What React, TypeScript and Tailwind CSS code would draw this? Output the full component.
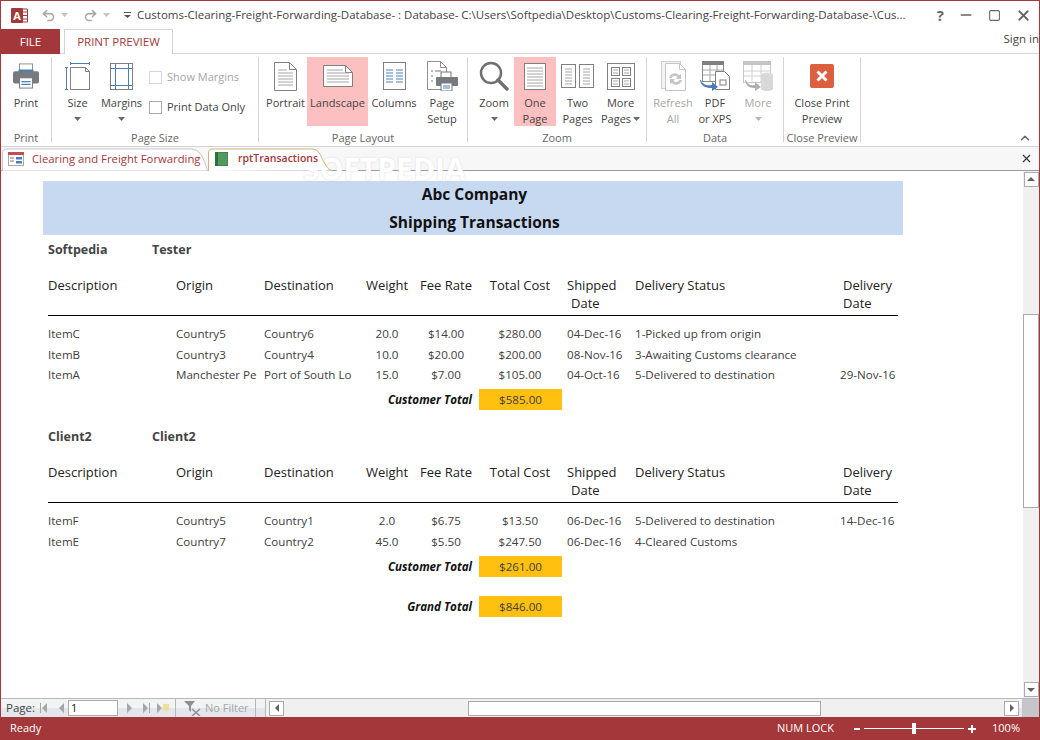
import React from 'react';
import { Undo2, Redo2, Minus, Square, X, ChevronUp } from 'lucide-react';

const BLUE = '#4a7ebb';

function Caret({ c = '#6a6a6a' }: { c?: string }) {
  return (
    <svg width="7" height="4" viewBox="0 0 7 4" className="shrink-0">
      <path d="M0 0h7L3.5 4z" fill={c} />
    </svg>
  );
}

const PrintIcon = () => (
  <svg width="28" height="26" viewBox="0 0 30 28">
    <rect x="8" y="1" width="14" height="9" fill="#fff" stroke="#8a8a8a" />
    <rect x="7" y="7" width="16" height="4" fill={BLUE} />
    <path d="M3 9h24a2 2 0 0 1 2 2v9a2 2 0 0 1-2 2H3a2 2 0 0 1-2-2v-9a2 2 0 0 1 2-2z" fill="#777b80" />
    <rect x="8" y="16" width="14" height="11" fill="#fff" stroke="#777" />
    <path d="M10 20h10M10 23h10" stroke={BLUE} strokeWidth="1.5" />
  </svg>
);
const SizeIcon = () => (
  <svg width="26" height="29" viewBox="0 0 26 29">
    <path d="M5.5 5.5h15l4 4v18h-19z" fill="#fff" stroke="#808080" />
    <path d="M20.5 5.5v4h4" fill="none" stroke="#808080" />
    <path d="M5.5 1.5h19M5.500 0v3M24.500 0v3M1.500 5.500v22M0 5.500h3M0 27.500h3" stroke={BLUE} />
  </svg>
);
const MarginsIcon = () => (
  <svg width="24" height="29" viewBox="0 0 24 29">
    <rect x="0.5" y="1.5" width="22" height="26" fill="#fff" stroke="#7f7f7f" />
    <path d="M5.500 2v25M18.500 2v25M1 6.500h21M1 23.500h21" stroke={BLUE} />
  </svg>
);
const PortraitIcon = () => (
  <svg width="23" height="29" viewBox="0 0 23 29">
    <path d="M.5.5h15l7 7v21H.5z" fill="#fff" stroke="#808080" />
    <path d="M15.500.5v7h7" fill="none" stroke="#808080" />
    <path d="M4 8h9M4 11h15M4 14h15M4 17h15M4 20h15M4 23h15" stroke="#a6a6a6" />
  </svg>
);
const LandscapeIcon = () => (
  <svg width="30" height="22" viewBox="0 0 30 22">
    <path d="M.5.5h22l7 7v14H.5z" fill="#fff" stroke="#808080" />
    <path d="M22.500.5v7h7" fill="none" stroke="#808080" />
    <path d="M4 5h16M4 8h22M4 11h22M4 14h22M4 17h22" stroke="#a6a6a6" />
  </svg>
);
const ColumnsIcon = () => (
  <svg width="23" height="28" viewBox="0 0 23 28">
    <rect x=".5" y=".5" width="22" height="27" fill="#fff" stroke="#808080" />
    <path d="M3 8h7M13 8h7M3 11h7M13 11h7M3 14h7M13 14h7M3 17h7M13 17h7M3 20h7M13 20h7" stroke={BLUE} />
  </svg>
);
const SetupIcon = () => (
  <svg width="31" height="30" viewBox="0 0 31 30">
    <path d="M.5.5h13l6 6v22H.5z" fill="#fff" stroke="#909090" />
    <path d="M13.500.5v6h6" fill="none" stroke="#909090" />
    <path d="M4 10h2M8 10h6M4 15h2M4 20h2" stroke="#777" />
    <rect x="14" y="11" width="10" height="7" fill="#fff" stroke="#777" />
    <path d="M10 16h20a1 1 0 0 1 1 1v7a1 1 0 0 1-1 1H10a1 1 0 0 1-1-1v-7a1 1 0 0 1 1-1z" fill="#777b80" />
    <rect x="14" y="22" width="11" height="8" fill="#fff" stroke="#777" />
    <path d="M16 25h7M16 27h7" stroke={BLUE} />
  </svg>
);
const ZoomIcon = () => (
  <svg width="30" height="30" viewBox="0 0 30 30">
    <circle cx="12" cy="12" r="10" fill="none" stroke="#707070" strokeWidth="2.500" />
    <path d="M19 19l9 9" stroke="#707070" strokeWidth="3.500" strokeLinecap="round" />
  </svg>
);
const OnePageIcon = () => (
  <svg width="22" height="27" viewBox="0 0 22 27">
    <rect x=".5" y=".5" width="21" height="26" fill="#fff" stroke="#808080" />
    <path d="M3 5h16M3 8h16M3 11h16M3 14h16M3 17h16M3 20h16M3 23h16" stroke="#a6a6a6" />
  </svg>
);
const TwoPagesIcon = () => (
  <svg width="33" height="24" viewBox="0 0 33 24">
    <rect x=".5" y=".5" width="14" height="23" fill="#fff" stroke="#808080" />
    <rect x="18.500" y=".5" width="14" height="23" fill="#fff" stroke="#808080" />
    <path d="M4 5h7M4 8h7M4 11h7M4 14h7M4 17h7M4 20h7M22 5h7M22 8h7M22 11h7M22 14h7M22 17h7M22 20h7" stroke="#a6a6a6" />
  </svg>
);
const MorePagesIcon = () => (
  <svg width="28" height="27" viewBox="0 0 28 27">
    <rect x=".5" y=".5" width="27" height="26" fill="#fff" stroke="#808080" />
    <rect x="4.500" y="4.500" width="8" height="8" fill="#fff" stroke="#808080" />
    <rect x="15.500" y="4.500" width="8" height="8" fill="#fff" stroke="#808080" />
    <rect x="4.500" y="15.500" width="8" height="8" fill="#fff" stroke="#808080" />
    <rect x="15.500" y="15.500" width="8" height="8" fill="#fff" stroke="#808080" />
    <path d="M6 7h5M6 10h5M17 7h5M17 10h5M6 18h5M6 21h5M17 18h5M17 21h5" stroke="#a6a6a6" />
  </svg>
);
const RefreshIcon = () => (
  <svg width="25" height="30" viewBox="0 0 25 30">
    <rect x=".5" y=".5" width="19" height="27" fill="#f4f4f4" stroke="#cfcfcf" />
    <path d="M4.500 2.500h14l6 6v21h-20z" fill="#fff" stroke="#c4c4c4" />
    <path d="M18.500 2.500v6h6" fill="none" stroke="#c4c4c4" />
    <path d="M8 17a6 6 0 0 1 10-3l2-1v5h-5l1.500-2a4 4 0 0 0-6 1zM21 19a6 6 0 0 1-10 3l-2 1v-5h5l-1.500 2a4 4 0 0 0 6-1z" fill="#c6c6c6" />
  </svg>
);
const PdfIcon = () => (
  <svg width="31" height="30" viewBox="0 0 31 30">
    <rect x="2.500" y=".5" width="21" height="20" fill="#fff" stroke="#8a8a8a" />
    <rect x="2" y="0" width="22" height="4" fill="#808080" />
    <path d="M3 9h20M3 14h20M10 4v16M17 4v16" stroke="#a8a8a8" />
    <path d="M15.500 10.500h9l5 5v13h-14z" fill="#fff" stroke="#7f7f7f" />
    <rect x="20" y="19" width="6" height="5" fill="#fff" stroke="#7f7f7f" />
    <path d="M1 19c1 4 5 6 11 5v-3l6 5-6 4v-3C7 27 1 26 0 19z" fill={BLUE} />
  </svg>
);
const MoreDataIcon = () => (
  <svg width="30" height="30" viewBox="0 0 30 30">
    <rect x=".5" y=".5" width="27" height="21" fill="#fff" stroke="#c8c8c8" />
    <rect x="0" y="0" width="28" height="4" fill="#c4c4c4" />
    <path d="M1 10h26M1 15h26M9 4v17M18 4v17" stroke="#d0d0d0" />
    <path d="M3 19c1 4 4 6 9 5v-3l6 5-6 4v-3C7 27 3 26 2 19z" fill="#b0b0b0" />
    <ellipse cx="24" cy="14" rx="6" ry="2.500" fill="#dcdcdc" />
    <path d="M18 14h12v14c0 1-3 2-6 2s-6-1-6-2z" fill="#d8d8d8" />
  </svg>
);
const CloseIcon = () => (
  <svg width="24" height="24" viewBox="0 0 24 24">
    <rect width="24" height="24" rx="2" fill="#dc5f3f" />
    <path d="M7.500 7.500l9 9M16.500 7.500l-9 9" stroke="#fff" strokeWidth="3" />
  </svg>
);

type BtnProps = {
  w: string;
  icon: React.ReactNode;
  lines: string[];
  caret?: boolean;
  dim?: boolean;
  on?: boolean;
};

function RibbonBtn({ w, icon, lines, caret, dim, on }: BtnProps) {
  return (
    <div className={`${w} h-[69px] flex flex-col items-center shrink-0 ${on ? 'bg-[#fcc0c0]' : ''} ${dim ? 'text-[#a6a6a6]' : 'text-[#444]'}`}>
      <div className="h-[38px] w-full flex items-center justify-center shrink-0">{icon}</div>
      {lines.map(l => (
        <div key={l} className="leading-[16px] whitespace-nowrap">{l}</div>
      ))}
      {caret && (
        <div className="h-[16px] flex items-center justify-center">
          <Caret c={dim ? '#b5b5b5' : '#6a6a6a'} />
        </div>
      )}
    </div>
  );
}

function Group({ w, label, children }: { w: string; label: string; children: React.ReactNode }) {
  return (
    <div className={`${w} h-[85px] flex flex-col border-r border-[#d4d4d4] shrink-0`}>
      <div className="h-[71px] flex shrink-0">{children}</div>
      <div className="flex-1 flex items-start justify-center pt-[3px] leading-[14px] text-[#666] text-[11px] whitespace-nowrap">{label}</div>
    </div>
  );
}

type Row = { d: string; o: string; t: string; w: string; f: string; c: string; s: string; st: string; del?: string };

const GRID = 'grid grid-cols-[128px_88px_101px_49px_62px_88px_68px_211px_55px]';

function Header() {
  return (
    <div className="border-b border-black h-[41px] pt-[1px] mr-[5px]">
      <div className={`${GRID} text-[#222] text-[13px] leading-[18px]`}>
        <div>Description</div>
        <div>Origin</div>
        <div>Destination</div>
        <div className="text-center -ml-[5px] whitespace-nowrap">Weight</div>
        <div className="text-center -mr-[2px]">Fee Rate</div>
        <div className="text-center">Total Cost</div>
        <div className="pl-[3px]">Shipped<div className="pl-[4px]">Date</div></div>
        <div className="pl-[3px]">Delivery Status</div>
        <div>Delivery<div>Date</div></div>
      </div>
    </div>
  );
}

function DataRow({ r }: { r: Row }) {
  return (
    <div className={`${GRID} text-[#404040] text-[11.6px] leading-[17px] h-[20px] first:h-[21px] pt-[2px] whitespace-nowrap`}>
      <div>{r.d}</div>
      <div>{r.o}</div>
      <div>{r.t}</div>
      <div className="text-center -ml-[5px]">{r.w}</div>
      <div className="text-center -mr-[2px]">{r.f}</div>
      <div className="text-center">{r.c}</div>
      <div className="pl-[3px]">{r.s}</div>
      <div className="pl-[3px]">{r.st}</div>
      <div className="-ml-[3px]">{r.del}</div>
    </div>
  );
}

function Total({ label, value }: { label: string; value: string }) {
  return (
    <div className="flex items-center h-[21px]">
      <div className="w-[431px] text-right pr-[7px] font-bold italic text-[11.6px] text-[#111]">{label}</div>
      <div className="w-[83px] h-[21px] bg-[#ffc010] flex items-center justify-center text-[11.6px] text-[#404040]">{value}</div>
    </div>
  );
}

function Customer({ a, b, rows, total, mt, gap }: { a: string; b: string; rows: Row[]; total: string; mt: string; gap: string }) {
  return (
    <div className={mt}>
      <div className="flex font-bold text-[#444] text-[12.500px] h-[18px] items-center">
        <div className="w-[104px]">{a}</div>
        <div>{b}</div>
      </div>
      <div className="mt-[16px]"><Header /></div>
      <div className="mt-[7px]">
        {rows.map(r => <DataRow key={r.d} r={r} />)}
      </div>
      <div className={gap}><Total label="Customer Total" value={total} /></div>
    </div>
  );
}

const SOFT: Row[] = [
  { d: 'ItemC', o: 'Country5', t: 'Country6', w: '20.0', f: '$14.00', c: '$280.00', s: '04-Dec-16', st: '1-Picked up from origin' },
  { d: 'ItemB', o: 'Country3', t: 'Country4', w: '10.0', f: '$20.00', c: '$200.00', s: '08-Nov-16', st: '3-Awaiting Customs clearance' },
  { d: 'ItemA', o: 'Manchester Pe', t: 'Port of South Lo', w: '15.0', f: '$7.00', c: '$105.00', s: '04-Oct-16', st: '5-Delivered to destination', del: '29-Nov-16' },
];
const CLIENT: Row[] = [
  { d: 'ItemF', o: 'Country5', t: 'Country1', w: '2.0', f: '$6.75', c: '$13.50', s: '06-Dec-16', st: '5-Delivered to destination', del: '14-Dec-16' },
  { d: 'ItemE', o: 'Country7', t: 'Country2', w: '45.0', f: '$5.50', c: '$247.50', s: '06-Dec-16', st: '4-Cleared Customs' },
];

function ScrollBtn({ dir, cls }: { dir: 'u' | 'd' | 'l' | 'r'; cls?: string }) {
  const d = { u: 'M1 6h8L5 2z', d: 'M1 3h8L5 7z', l: 'M7 1v8L3 5z', r: 'M3 1v8L7 5z' }[dir];
  return (
    <div className={`w-[15px] h-[15px] bg-white border border-[#ababab] flex items-center justify-center shrink-0 ${cls ?? ''}`}>
      <svg width="10" height="10" viewBox="0 0 10 10"><path d={d} fill="#606060" /></svg>
    </div>
  );
}

export default function App() {
  return (
    <div className="w-[1040px] h-[740px] flex flex-col bg-white border-x border-t border-[#a4373a] overflow-hidden text-[11px] text-[#444] font-['Open_Sans',sans-serif]">
      {/* title bar */}
      <div className="h-[28px] flex items-center shrink-0">
        <div className="w-[136px] flex items-center pl-[10px] shrink-0">
          <svg width="17" height="17" viewBox="0 0 17 17">
            <path d="M8 2h8.500v13H8z" fill="#fff" stroke="#a4373a" />
            <path d="M10 5h6M10 8.500h6M10 12h6" stroke="#a4373a" />
            <rect x="0" y="1" width="12" height="15" rx="1" fill="#a4373a" />
            <text x="6" y="13" textAnchor="middle" fontSize="11" fontWeight="700" fill="#fff">A</text>
          </svg>
          <Undo2 size={15} className="ml-[13px] text-[#a8a8a8]" strokeWidth={2.500} />
          <div className="ml-[5px]"><Caret c="#c4c4c4" /></div>
          <Redo2 size={15} className="ml-[15px] text-[#a8a8a8]" strokeWidth={2.500} />
          <div className="ml-[5px]"><Caret c="#c4c4c4" /></div>
          <svg width="7" height="6" viewBox="0 0 7 6" className="ml-[14px]">
            <path d="M0 0h7v1H0zM0 3h7L3.500 6z" fill="#555" />
          </svg>
        </div>
        <div className="w-[780px] text-[11.500px] text-[#444] whitespace-nowrap overflow-hidden shrink-0">
          {'Customs-Clearing-Freight-Forwarding-Database- : Database- C:\\Users\\Softpedia\\Desktop\\Customs-Clearing-Freight-Forwarding-Database-\\Cus...'}
        </div>
        <div className="flex-1 flex items-center justify-end pr-[7px] gap-[12px] text-[#666]">
          <span className="font-bold text-[15px] leading-none mr-[2px]">?</span>
          <Minus size={16} strokeWidth={2.500} />
          <Square size={13} strokeWidth={2} className="mx-[2px]" />
          <X size={17} strokeWidth={2.500} />
        </div>
      </div>

      {/* ribbon tabs */}
      <div className="h-[25px] flex items-end border-b border-[#d4d4d4] shrink-0">
        <div className="w-[59px] h-[25px] mb-[-1px] bg-[#a4373a] text-white flex items-center justify-center text-[11.500px]">FILE</div>
        <div className="w-[109px] h-[25px] mb-[-1px] ml-[4px] bg-white border border-b-0 border-[#d4d4d4] text-[#a4373a] flex items-center justify-center text-[11.500px]">PRINT PREVIEW</div>
        <div className="flex-1 self-start text-right text-[11.500px] leading-[20px] whitespace-nowrap overflow-hidden">Sign in</div>
      </div>

      {/* ribbon */}
      <div className="h-[93px] flex pt-[3px] border-b border-[#d4d4d4] relative shrink-0">
        <Group w="w-[51px]" label="Print">
          <RibbonBtn w="w-[50px]" icon={<PrintIcon />} lines={['Print']} />
        </Group>
        <Group w="w-[207px]" label="Page Size">
          <div className="w-[5px]" />
          <RibbonBtn w="w-[41px]" icon={<SizeIcon />} lines={['Size']} caret />
          <RibbonBtn w="w-[47px]" icon={<MarginsIcon />} lines={['Margins']} caret />
          <div className="flex flex-col pl-[4px] pt-[12px] gap-[14px] whitespace-nowrap">
            <div className="flex items-center gap-[5px] text-[#a6a6a6] h-[16px]">
              <span className="w-[13px] h-[13px] border border-[#d6d6d6] bg-white" />Show Margins
            </div>
            <div className="flex items-center gap-[5px] h-[16px]">
              <span className="w-[13px] h-[13px] border border-[#ababab] bg-white" />Print Data Only
            </div>
          </div>
        </Group>
        <Group w="w-[209px]" label="Page Layout">
          <div className="w-[5px]" />
          <RibbonBtn w="w-[43px]" icon={<PortraitIcon />} lines={['Portrait']} />
          <RibbonBtn w="w-[61px]" icon={<LandscapeIcon />} lines={['Landscape']} on />
          <RibbonBtn w="w-[52px]" icon={<ColumnsIcon />} lines={['Columns']} />
          <RibbonBtn w="w-[44px]" icon={<SetupIcon />} lines={['Page', 'Setup']} />
        </Group>
        <Group w="w-[179px]" label="Zoom">
          <div className="w-[7px]" />
          <RibbonBtn w="w-[38px]" icon={<ZoomIcon />} lines={['Zoom']} caret />
          <div className="w-[1px]" />
          <RibbonBtn w="w-[42px]" icon={<OnePageIcon />} lines={['One', 'Page']} on />
          <RibbonBtn w="w-[43px]" icon={<TwoPagesIcon />} lines={['Two', 'Pages']} />
          <div className="w-[43px] h-[69px] flex flex-col items-center shrink-0">
            <div className="h-[38px] w-full flex items-center justify-center shrink-0"><MorePagesIcon /></div>
            <div className="leading-[16px]">More</div>
            <div className="leading-[16px] flex items-center gap-[2px] whitespace-nowrap">Pages <Caret /></div>
          </div>
        </Group>
        <Group w="w-[137px]" label="Data">
          <div className="w-[3px]" />
          <RibbonBtn w="w-[46px]" icon={<RefreshIcon />} lines={['Refresh', 'All']} dim />
          <RibbonBtn w="w-[38px]" icon={<PdfIcon />} lines={['PDF', 'or XPS']} />
          <RibbonBtn w="w-[48px]" icon={<MoreDataIcon />} lines={['More']} caret dim />
        </Group>
        <Group w="w-[77px]" label="Close Preview">
          <RibbonBtn w="w-[76px]" icon={<CloseIcon />} lines={['Close Print', 'Preview']} />
        </Group>
        <ChevronUp size={14} strokeWidth={2.500} className="absolute right-[7px] bottom-[1px] text-[#666]" />
      </div>

      {/* doc tabs */}
      <div className="h-[24px] flex items-end bg-[#f7f7f7] border-b border-[#9a9aa6] relative shrink-0 text-[11.300px]">
        <span className="absolute left-[302px] top-[10px] text-[30px] font-bold text-white leading-[24px] [text-shadow:0_0_2px_#d4d4d4] whitespace-nowrap">SOFTPEDIA</span>
        <div className="ml-[1px] w-[206px] h-[23px] mb-[-1px] relative z-10 flex items-center pl-[6px] pb-[1px] text-[#a4373a] whitespace-nowrap">
          <svg width="206" height="23" viewBox="0 0 206 23" className="absolute left-0 top-0">
            <path d="M.5 23V5Q.5 1 5 1H188C198 1 201 8 205.500 23z" fill="#fff" stroke="#c8c8c8" />
          </svg>
          <svg width="16" height="14" viewBox="0 0 16 14" className="relative">
            <rect x=".5" y=".5" width="15" height="13" fill="#fff" stroke="#a8a8a8" />
            <rect x="0" y="0" width="16" height="3" fill="#c0504d" />
            <path d="M2 6h4M2 9h4" stroke="#7f7f7f" />
            <rect x="8" y="5" width="6" height="2.500" fill={BLUE} />
            <rect x="8" y="9" width="6" height="2.500" fill={BLUE} />
          </svg>
          <span className="ml-[8px] relative">Clearing and Freight Forwarding</span>
        </div>
        <div className="w-[124px] h-[23px] mb-[-1px] relative z-10 flex items-center pl-[7px] pb-[1px] text-[#a4373a] font-semibold text-[10.500px] whitespace-nowrap">
          <svg width="124" height="23" viewBox="0 0 124 23" className="absolute left-0 top-0">
            <path d="M.5 23V5Q.5 1 5 1H103C112 1 112 8 116 14C119 20 121 22 124 22.500" fill="#fff" stroke="#d2b27a" />
          </svg>
          <svg width="13" height="14" viewBox="0 0 13 14" className="relative">
            <rect x="0" y="0" width="13" height="14" fill="#4f9a5c" stroke="#3a3a3a" strokeWidth=".5" />
            <rect x="0" y="0" width="3" height="14" fill="#2f6f3c" />
          </svg>
          <span className="ml-[10px] relative">rptTransactions</span>
        </div>
        <X size={13} strokeWidth={2} className="absolute right-[6px] top-[5px] text-[#333]" />
      </div>

      {/* report + vertical scrollbar */}
      <div className="flex-1 flex min-h-0">
        <div className="flex-1 pl-[42px] pt-[10px] min-w-0">
          <div className="w-[860px]">
            <div className="h-[54px] bg-[#c6d9f1] pl-[3px] flex flex-col items-center justify-center font-bold text-[#111] text-[15.500px] leading-[28px]">
              <div>Abc Company</div>
              <div>Shipping Transactions</div>
            </div>
            <div className="pl-[5px] pt-[6px]">
              <Customer a="Softpedia" b="Tester" rows={SOFT} total="$585.00" mt="" gap="mt-[5px]" />
              <Customer a="Client2" b="Client2" rows={CLIENT} total="$261.00" mt="mt-[18px]" gap="mt-[5px]" />
              <div className="mt-[19px]"><Total label="Grand Total" value="$846.00" /></div>
            </div>
          </div>
        </div>
        <div className="w-[16px] bg-[#f0f0f0] flex flex-col items-center justify-between py-[1px] relative shrink-0">
          <ScrollBtn dir="u" />
          <div className="absolute top-[143px] left-0 w-[16px] h-[194px] bg-white border border-[#ababab]" />
          <ScrollBtn dir="d" />
        </div>
      </div>

      {/* record nav + horizontal scrollbar */}
      <div className="h-[19px] flex border-t border-[#b8b8bc] bg-[linear-gradient(#f2f3f4_50%,#e3e6ea_50%)] shrink-0 text-[#a6a6a6]">
        <div className="w-[175px] flex items-center pl-[5px] border-r border-[#b8b8bc] shrink-0">
          <span className="text-[#444] text-[11.500px] w-[33px]">Page:</span>
          <svg width="29" height="12" viewBox="0 0 29 12" className="shrink-0">
            <path d="M1 1h1v10H1zM8 1v10L3 6zM25 1v10L20 6z" fill="#a6a6a6" />
          </svg>
          <div className="w-[50px] h-[16px] bg-white border border-[#ababab] text-[#222] leading-[14px] pl-[2px] shrink-0">1</div>
          <svg width="52" height="12" viewBox="0 0 52 12" className="shrink-0 ml-[1px]">
            <path d="M8 1v10l5-5zM24 1v10l5-5zM30 1h1v10h-1zM38 1v10l5-5z" fill="#a6a6a6" />
            <rect x="44" y="2" width="6" height="7" fill="#ecdf9c" />
          </svg>
        </div>
        <div className="w-[80px] flex items-center pl-[8px] border-r border-[#b8b8bc] gap-[3px] shrink-0 whitespace-nowrap">
          <svg width="18" height="15" viewBox="0 0 18 15">
            <path d="M0 0h11L7 5v6L5 9V5z" fill="#909090" />
            <path d="M8 8l8 7M16 8l-8 7" stroke="#909090" strokeWidth="1.500" />
          </svg>
          No Filter
        </div>
        <div className="w-[10px] border-r border-[#b8b8bc] shrink-0" />
        <div className="flex-1 flex items-center bg-[#f0f0f0] pl-[3px] min-w-0">
          <ScrollBtn dir="l" />
          <div className="ml-[184px] w-[353px] h-[15px] bg-white border border-[#ababab]" />
          <div className="flex-1" />
          <ScrollBtn dir="r" />
        </div>
        <div className="w-[17px] ml-[3px] bg-[#c4c6ca] shrink-0" />
      </div>

      {/* status bar */}
      <div className="h-[23px] bg-[#a4373a] text-white flex items-center text-[11px] -mx-px px-[10px] shrink-0">
        <span>Ready</span>
        <span className="ml-auto">NUM LOCK</span>
        <div className="ml-[20px] w-[122px] flex items-center">
          <span className="w-[6px] h-[2px] bg-white" />
          <div className="flex-1 mx-[4px] h-[1px] bg-white relative">
            <span className="absolute left-[48px] -top-[5px] w-[4px] h-[11px] bg-white" />
          </div>
          <span className="relative w-[8px] h-[8px]">
            <span className="absolute inset-x-0 top-[3px] h-[2px] bg-white" />
            <span className="absolute inset-y-0 left-[3px] w-[2px] bg-white" />
          </span>
        </div>
        <span className="ml-[16px] mr-[10px]">100%</span>
      </div>
    </div>
  );
}
